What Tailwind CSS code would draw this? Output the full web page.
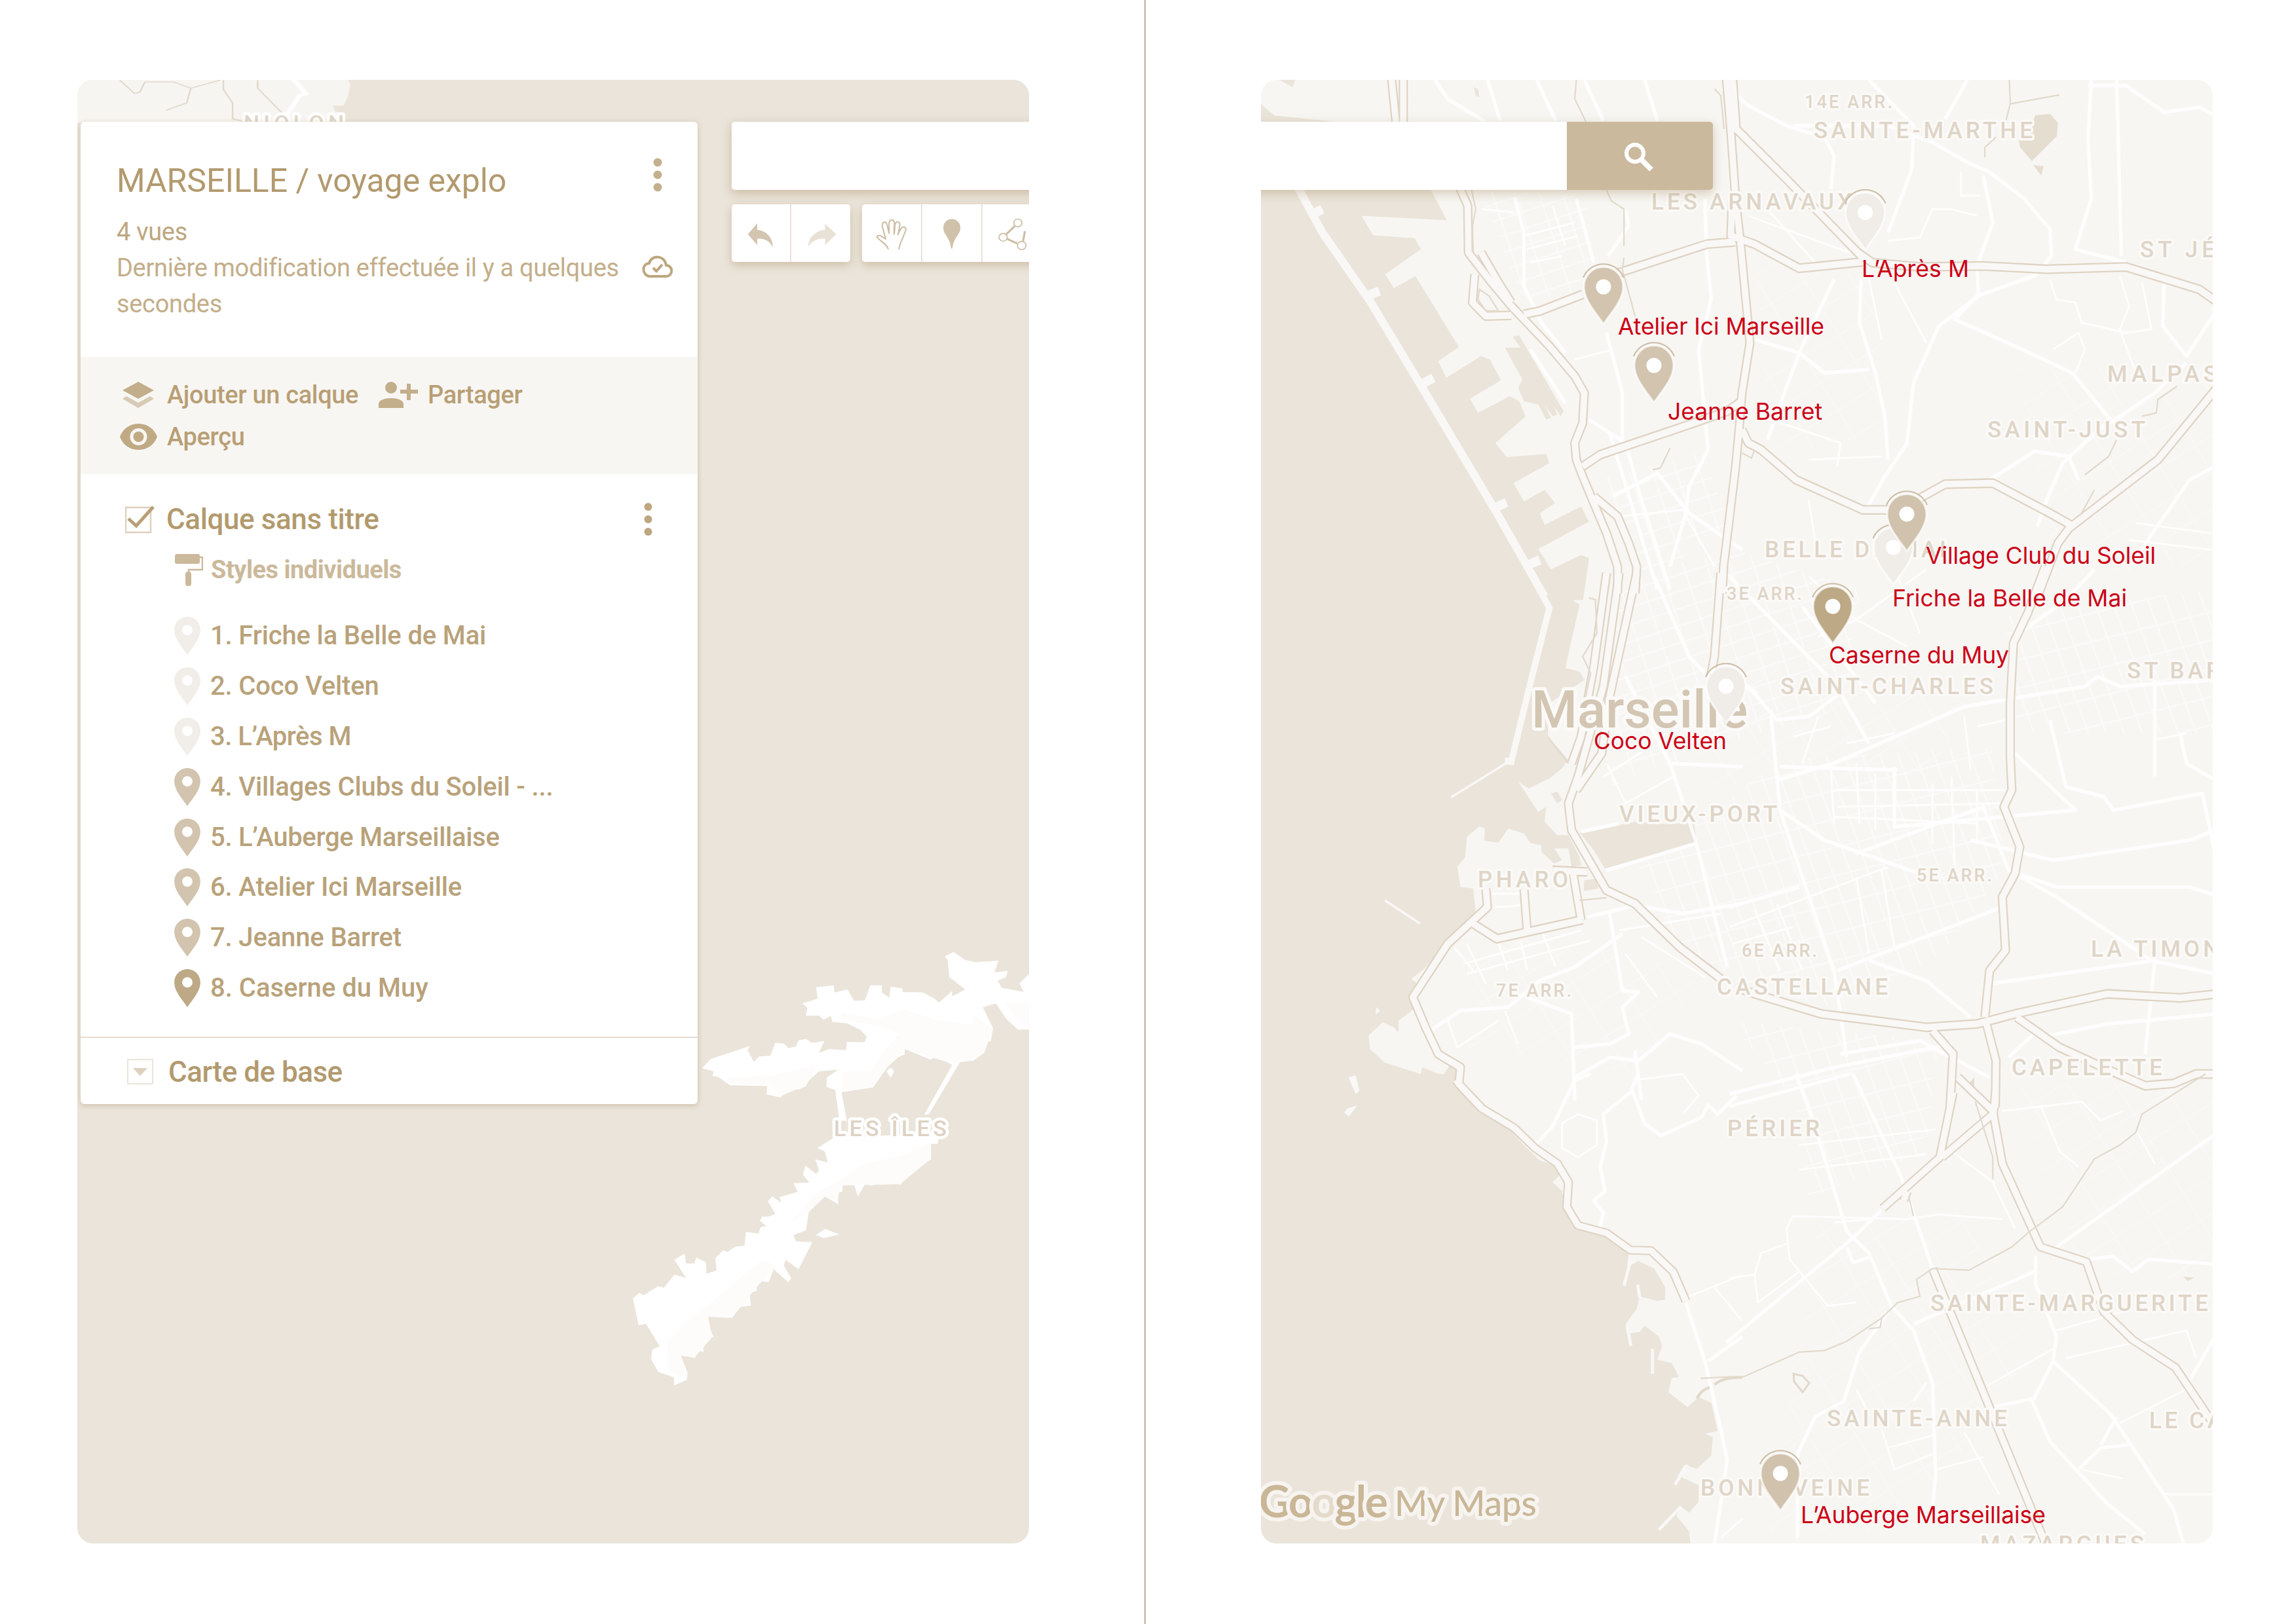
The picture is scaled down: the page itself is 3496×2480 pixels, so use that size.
<!DOCTYPE html>
<html lang="fr">
<head>
<meta charset="utf-8">
<title>MARSEILLE / voyage explo</title>
<script src="https://cdn.jsdelivr.net/npm/@tailwindcss/browser@4"></script>
</head>
<body class="bg-white">
<svg class="hidden">
  <defs>
    <path id="pin" fill-rule="evenodd" d="M0-30.500C-17-30.500-30-17-30 0C-30 20-13 38 0 57C13 38 30 20 30 0C30-17 17-30.500 0-30.500Z"/>
    <g id="mark">
      <path d="M-31-14A33.500 33.500 0 0 1 31-14" fill="none" stroke="#cdbda5" stroke-width="2"/>
      <use href="#pin" stroke="#fff" stroke-opacity=".7" stroke-width="3"/>
      <circle r="11.500" fill="#fff"/>
    </g>
  </defs>
</svg>
<main class="flex h-[2480px] w-[3496px] font-['Roboto',sans-serif]">
  <!-- Left page -->
  <section class="h-full w-[1749px] border-r-2 border-[#c0ae95] pt-[122px] pl-[118px]">
    <div class="relative h-[2235px] w-[1453px] overflow-hidden rounded-[24px] bg-[#eae4da]">
      <svg class="absolute inset-0 size-full" viewBox="118 122 1453 2235">
        <g transform="translate(100,100) scale(.6378,.4082)" fill="none" stroke-width="4">
          <path fill="#f7f5f2" d="M20 50H675L682 75L675 120L665 150L640 150L645 170L668 185V215H20Z"/>
          <g stroke="#e2d9cc"><path d="M130 55L165 105L178 100L190 62L260 62L300 85L370 55M300 85L290 140L240 168M378 55L378 90L400 140V200L430 210M460 55V85L520 180"/></g>
          <path stroke="#fff" stroke-width="12" d="M545 50L575 105L560 112L530 185"/>
        </g>
        <g transform="translate(900,1400) scale(.4464,.4719)" fill="#fff">
          <path d="M385 490L415 460L550 418L540 430L562 470L580 452L618 450L635 408L665 410L680 425L705 420L715 400L740 395L760 408L803 402L785 440L820 428L877 432L880 405L940 406L948 388L925 365L880 345L830 340L825 320L800 333L785 320L740 320L745 295L728 280L780 265L775 228L835 222L838 245L882 235L905 272L942 270L960 222L1000 222L1000 245L1025 262L1030 226L1070 232L1070 243L1140 245L1180 265L1195 278L1240 240L1240 258L1285 235L1230 195L1225 140L1215 128L1245 114L1285 140L1320 147L1398 142L1385 180L1430 175L1425 195L1395 207L1410 230L1485 243L1470 215L1515 175V365L1465 365L1425 330L1390 280L1345 293L1380 360L1372 403L1350 405L1350 440L1310 467L1275 460L1258 485L1160 640H1145L1240 480L1205 460L1180 455L1165 462L1078 428V445L1055 455L1020 485L970 552L862 568L880 660H855L840 560L810 550L812 520L850 495L785 500L750 530L740 548L712 560L705 540L665 560L655 585L605 575L608 548L480 545L440 518L420 515L425 500Z"/>
          <path d="M1015 500L1030 488L1042 500L1030 520Z"/>
          <path d="M835 715L1200 700L1190 735H1168V785L1120 808L1062 868L1015 843L965 870L945 860L918 905L905 868L865 870V890L850 892V930L805 905L750 955L740 1015L698 1030L705 1050L762 1053L715 1140L670 1110L665 1130L690 1170L680 1183L630 1140L612 1183L570 1175L572 1210L547 1218L552 1258L493 1265L490 1298L405 1295V1320L425 1360L390 1370V1408L362 1402V1428L312 1420L335 1475L333 1498L290 1517L288 1490L235 1473L210 1430L215 1400L240 1390L193 1317L168 1322L148 1235L170 1217L185 1225L235 1195L255 1200L290 1158L330 1168L290 1110L325 1090L330 1122H358L365 1103L398 1118L400 1155L435 1145L430 1105L458 1078L470 1085L500 1067L530 1065L535 1020L578 1025L585 1005L605 1000L583 985L590 970H612L635 962L610 920L625 905L655 925L650 907L712 890L697 862L752 860L730 835L738 805L775 833L785 820L772 785L815 795L805 760L780 748Z"/>
          <path d="M775 1030L805 1010L855 1028L800 1040Z"/>
          <g fill="#fdfcfb"><path d="M860 310L980 330L1080 300L1190 335L1300 350L1320 320L1378 365L1350 440L1310 465L1240 475L1078 428L1015 485L970 550L865 565V500L960 500L1010 430L1060 380L980 350L860 335Z"/><path d="M1420 275L1512 280V360L1470 340Z"/><path d="M480 540L470 520L620 515L780 480L740 545L655 580L610 545Z"/><path d="M770 900L940 800L1080 770L1165 730V785L1062 865L965 868L860 868L845 925L805 905L680 1000Z"/><path d="M400 1260L590 1110L640 1130L570 1200L490 1295L405 1295L420 1360L360 1425L310 1418L333 1495L270 1470L265 1380L330 1310Z"/></g>
        </g>
        <g fill="#ddd2c3" stroke="#fff" stroke-width="9" stroke-linejoin="round" class="[paint-order:stroke] font-medium text-[34px]">
          <text x="1273" y="1735" textLength="172">LES ÎLES</text>
          <text x="372" y="200" textLength="153" fill="#e0d7ca">NIOLON</text>
        </g>
      </svg>

      <!-- Layers card -->
      <div class="absolute top-[64px] left-[5px] flex h-[1500px] w-[942px] flex-col rounded-[6px] bg-white text-[#b29a6e] shadow-[0_2px_8px_rgba(165,135,90,0.4)]">
        <header class="flex h-[359px] justify-between pt-[60px] pl-[55px]">
          <div>
            <h1 class="text-[50px] leading-[60px] font-normal tracking-[-0.05px] whitespace-nowrap">MARSEILLE / voyage explo</h1>
            <p class="mt-[21px] text-[38px] leading-[55px] tracking-[-0.32px] text-[#bda680]">4 vues<br><span class="whitespace-nowrap text-[#c3ae8a]">Dernière modification effectuée il y a quelques</span><br><span class="text-[#c3ae8a]">secondes</span></p>
          </div>
          <div class="mr-[4px] flex w-[114px] flex-col items-center">
            <svg class="h-[52px] w-[14px] -mt-[5px]" viewBox="0 0 14 52" fill="#c3b08d"><circle cx="7" cy="7" r="6.500"/><circle cx="7" cy="26" r="6.500"/><circle cx="7" cy="45" r="6.500"/></svg>
            <svg class="mt-[97px] h-[36px] w-[48px]" viewBox="0 0 48 36" fill="none" stroke="#bda67f" stroke-width="4"><path d="M12 32H37C48 31 48 16 37 15C35-1 14-1 11 12C-1 13 0 31 12 32Z"/><path d="M17 19L22 24L31 14"/></svg>
          </div>
        </header>
        <div class="h-[179px] bg-[#f8f6f3] pt-[26px] pl-[64px] text-[38px] font-medium tracking-[-0.35px] text-[#b89f75]">
          <div class="flex h-[64px] items-center">
            <svg class="h-[40px] w-[48px]" viewBox="0 0 48 40" fill="#c3ae8b"><path d="M24 0L48 13L24 26L0 13Z"/><path fill="#d8cbb5" d="M0 26L6 22L24 32L42 22L48 26L24 40Z"/></svg>
            <span class="ml-[20px] w-[290px] whitespace-nowrap">Ajouter un calque</span>
            <svg class="ml-[33px] h-[40px] w-[60px]" viewBox="0 0 60 40" fill="#c3ae8b"><circle cx="19" cy="9" r="9"/><path d="M0 40V34C0 22 38 22 38 34V40ZM43 3H49V12H60V18H49V28H43V18H33V12H43Z"/></svg>
            <span class="ml-[15px]">Partager</span>
          </div>
          <div class="flex h-[64px] items-center">
            <svg class="-ml-[4px] h-[40px] w-[57px]" viewBox="0 0 57 40" fill="#c0aa84"><path fill-rule="evenodd" d="M28.500 0C14 0 4 9 0 20C4 31 14 40 28.500 40S53 31 57 20C53 9 43 0 28.500 0ZM28.500 7A13 13 0 1 1 28.500 33A13 13 0 1 1 28.500 7Z"/><circle cx="28.500" cy="20" r="8"/></svg>
            <span class="ml-[15px]">Aperçu</span>
          </div>
        </div>
        <div class="flex-1 border-b-2 border-[#e6ddd0] pt-[39px]">
          <div class="flex h-[60px] items-center pr-[69px] pl-[68px]">
            <svg class="h-[44px] w-[46px]" viewBox="0 0 46 44" fill="none"><rect x="1" y="4" width="38" height="38" stroke="#ddd0bd" stroke-width="2.500"/><path d="M5 21L17 32L43 3" stroke="#b89f75" stroke-width="5"/></svg>
            <h2 class="ml-[17px] flex-1 text-[44px] font-medium tracking-[-0.4px]">Calque sans titre</h2>
            <svg class="h-[50px] w-[13px]" viewBox="0 0 13 50" fill="#bda680"><circle cx="6.500" cy="6" r="6"/><circle cx="6.500" cy="25" r="6"/><circle cx="6.500" cy="44" r="6"/></svg>
          </div>
          <div class="mt-[22px] flex h-[50px] items-center pl-[144px] text-[38px] font-bold tracking-[-0.5px] text-[#cbb99b]">
            <svg class="h-[49px] w-[43px]" viewBox="0 0 43 49" fill="#cbb99b"><rect width="38" height="15" rx="3"/><path d="M38 5H42V24H21V28" fill="none" stroke="#cbb99b" stroke-width="2.500"/><rect x="16" y="27" width="9" height="22" rx="4"/></svg>
            <span class="ml-[12px]">Styles individuels</span>
          </div>
          <ul class="mt-[38px] text-[40px] font-medium tracking-[-0.15px] text-[#b9a27a] [&>li]:flex [&>li]:h-[76.8px] [&>li]:items-center [&>li]:gap-[15px] [&>li]:pl-[143px] [&_svg]:h-[58px] [&_svg]:w-[40px]">
            <li><svg viewBox="-30 -30.500 60 87.500" fill="#f1ede8"><use href="#pin"/><circle r="12" fill="#fff"/></svg>1. Friche la Belle de Mai</li>
            <li><svg viewBox="-30 -30.500 60 87.500" fill="#f1ede8"><use href="#pin"/><circle r="12" fill="#fff"/></svg>2. Coco Velten</li>
            <li class="tracking-[-0.5px]"><svg viewBox="-30 -30.500 60 87.500" fill="#f1ede8"><use href="#pin"/><circle r="12" fill="#fff"/></svg>3. L’Après M</li>
            <li><svg viewBox="-30 -30.500 60 87.500" fill="#d2c4ae"><use href="#pin"/><circle r="12" fill="#fff"/></svg>4. Villages Clubs du Soleil - ...</li>
            <li class="tracking-[-0.3px]"><svg viewBox="-30 -30.500 60 87.500" fill="#d2c4ae"><use href="#pin"/><circle r="12" fill="#fff"/></svg>5. L’Auberge Marseillaise</li>
            <li><svg viewBox="-30 -30.500 60 87.500" fill="#d2c4ae"><use href="#pin"/><circle r="12" fill="#fff"/></svg>6. Atelier Ici Marseille</li>
            <li><svg viewBox="-30 -30.500 60 87.500" fill="#d2c4ae"><use href="#pin"/><circle r="12" fill="#fff"/></svg>7. Jeanne Barret</li>
            <li class="tracking-normal"><svg viewBox="-30 -30.500 60 87.500" fill="#bda986"><use href="#pin"/><circle r="12" fill="#fff"/></svg>8. Caserne du Muy</li>
          </ul>
        </div>
        <div class="flex h-[101px] items-center gap-[23px] pt-[2px] pl-[71px] text-[44px] font-medium tracking-[-0.5px]">
          <svg class="h-[39px] w-[40px]" viewBox="0 0 40 39"><rect x="1" y="1" width="38" height="37" fill="#fff" stroke="#ebe4da" stroke-width="2"/><path fill="#ddd0bd" d="M9 14H31L20 26Z"/></svg>
          Carte de base
        </div>
      </div>

      <!-- Search field and drawing tools -->
      <div class="absolute top-[64px] left-[999px] h-[104px] w-[500px] rounded-[5px] bg-white shadow-[0_5px_16px_rgba(165,135,90,0.45)]"></div>
      <div class="absolute top-[190px] left-[999px] flex h-[88px] gap-[18px] [&>div]:flex [&>div]:overflow-hidden [&>div]:rounded-[5px] [&>div]:bg-white [&>div]:shadow-[0_5px_14px_rgba(165,135,90,0.4)]">
        <div>
          <svg class="h-[88px] w-[91px] border-r-2 border-[#eae2d7]" viewBox="165 634 262 266" preserveAspectRatio="none"><path fill="#d3c5b0" d="M238 772L280 722V752C325 757 350 790 350 832C335 803 315 792 280 792V822Z"/></svg>
          <svg class="h-[88px] w-[90px]" viewBox="428 634 262 266" preserveAspectRatio="none"><path fill="#e9e1d5" d="M628 772L578 724V752C530 757 505 790 503 830C520 803 540 792 578 792V822Z"/></svg>
        </div>
        <div>
          <svg class="h-[88px] w-[92px] border-r-2 border-[#eae2d7]" viewBox="743 634 264 266" preserveAspectRatio="none" fill="none" stroke="#cdbda5" stroke-width="6" stroke-linecap="round" stroke-linejoin="round"><path d="M860 840C855 820 840 815 815 792C802 778 820 775 832 782L849 795L834 735C832 712 851 710 855 728L864 768M864 768L864 722C866 700 886 700 888 722L886 772M888 765L891 725C898 708 914 715 912 732L904 774M906 768L918 745C930 732 944 742 938 756L922 798C912 815 913 825 908 840"/></svg>
          <svg class="h-[88px] w-[92px] border-r-2 border-[#eae2d7]" viewBox="1007 634 266 266" preserveAspectRatio="none" fill="#d0c1aa"><path d="M1140 702C1118 702 1102 720 1102 742C1102 775 1132 785 1137 838H1143C1148 785 1179 775 1179 742C1179 720 1162 702 1140 702Z"/></svg>
          <svg class="h-[88px] w-[92px]" viewBox="1275 634 266 266" preserveAspectRatio="none" fill="none" stroke="#cdbda5"><g stroke-width="5"><circle cx="1431" cy="720" r="18"/><circle cx="1366" cy="786" r="18"/><circle cx="1448" cy="824" r="19"/></g><path stroke-width="9" d="M1417 735L1380 772M1384 794L1428 815M1454 803L1462 758"/></svg>
        </div>
      </div>
    </div>
  </section>

  <!-- Right page -->
  <section class="h-full w-[1747px] pt-[122px] pl-[176px]">
    <div class="relative h-[2235px] w-[1453px] overflow-hidden rounded-[24px] bg-[#f7f6f3]">
      <svg class="absolute inset-0 size-full" viewBox="1925 122 1453 2235">
        <defs>
          <pattern id="gridA" width="34" height="25" patternUnits="userSpaceOnUse" patternTransform="rotate(-18)"><path d="M0 0H34M0 0V25" stroke="#fff" stroke-width="5" fill="none"/></pattern>
          <pattern id="gridB" width="26" height="42" patternUnits="userSpaceOnUse" patternTransform="rotate(-14) skewX(6)"><path d="M0 0H26M0 0V42" stroke="#fff" stroke-width="5" fill="none"/></pattern>
          <pattern id="gridC" width="62" height="48" patternUnits="userSpaceOnUse" patternTransform="rotate(-32)"><path d="M0 0H62M0 0V48" stroke="#fdfdfc" stroke-width="5" fill="none"/></pattern>
          <!-- Expressways, drawn twice: outline, then roadway -->
          <g id="ways" fill="none" stroke-linejoin="round">
            <g transform="translate(1900,100) scale(.4847,.5102)">
              <path d="M462 30L478 180M500 30L500 180"/>
              <path d="M675 360L703 420L705 560L770 640L840 720L960 840L1040 930L1070 980L1065 1070L1040 1130L1045 1180L1065 1230L1100 1310L1140 1400L1175 1500L1175 1580"/>
              <path d="M1100 1290L1175 1350L1210 1430L1235 1500L1230 1580"/>
              <path d="M880 745L930 735L1065 685M1180 620L1455 535L1545 528"/>
              <path d="M1065 1200L1120 1165L1400 1075L1520 1035L1565 1005"/>
              <path d="M725 625L718 710L760 750L840 748M745 560L800 650L840 710"/>
            </g>
            <g transform="translate(2640,100) scale(.4847,.5102)">
              <path d="M-10 30L5 200L20 400L35 530L65 830L40 980L30 1100L20 1200L-18 1500L-22 1580"/>
              <path d="M10 30L22 190L180 340L420 575"/>
              <path d="M10 380L5 510L80 535L220 607L420 588M405 560L450 590L600 603L800 600L1000 610L1250 603L1480 670L1540 710"/>
              <path d="M40 1090L60 1130L100 1150L210 1240L420 1330L520 1330M600 1295L680 1253L830 1250L1000 1335L1075 1375"/>
              <path d="M1540 960L1350 1180L1070 1385L1035 1430L975 1580"/>
            </g>
            <g transform="translate(1900,880) scale(.4847,.5102)">
              <path d="M1180 -10L1130 330L1050 600L1020 680L1030 760L1140 940L1230 980L1370 1110L1500 1205"/>
              <path d="M1235 -10L1150 360L1125 530L1045 640"/>
              <path d="M1140 -10L1100 270L1060 480L1030 560"/>
              <path d="M1500 -10L1480 240L1468 300"/>
              <path d="M760 935L765 990L640 1100L530 1260L570 1350L610 1430L680 1470L675 1520L745 1590"/>
              <path d="M720 1040L795 1085L1065 1028M880 935L890 1060M1035 890L1060 1030M970 880L1080 885"/>
            </g>
            <g transform="translate(2640,880) scale(.4847,.5102)">
              <path d="M995 -30L940 110L895 200L885 380L885 540L890 640L865 690L915 810L900 890L860 960L870 1120L820 1180L805 1320"/>
              <path d="M20 1230L80 1250L290 1310L620 1350L780 1340L900 1310L1190 1250L1420 1262L1540 1250"/>
              <path d="M640 1360L705 1430L695 1590M810 1340L840 1450L838 1590"/>
              <path d="M905 1320L1040 1410L1200 1480L1310 1525L1400 1518L1470 1490L1540 1490"/>
              <path d="M720 1500L830 1600"/>
            </g>
            <g transform="translate(2640,1640) scale(.4847,.4719)">
              <path d="M705 60L663 270L483 435M830 130L670 270M838 60L832 130L860 290L980 560L1125 608L1180 770L1270 860L1405 950L1520 1125"/>
              <path d="M560 380L550 410M640 630L820 1080L1000 1530"/>
            </g>
            <g transform="translate(1900,1640) scale(.4847,.4719)">
              <path d="M665 20L690 50L745 110L850 175L915 240L985 290L1020 350L1015 430L1050 490L1140 515L1215 570L1280 572L1350 640L1390 735"/>
            </g>
          </g>
        </defs>

        <!-- Dense street blocks -->
        <g opacity=".55">
          <path fill="url(#gridA)" d="M2470 880L2650 840L2840 900L2820 1080L2620 1140L2460 1200Z M2260 290L2420 300L2440 460L2320 450Z M2450 730L2600 690L2640 800L2500 900Z"/>
          <path fill="url(#gridB)" d="M2500 1320L2720 1160L3040 1140L3060 1330L2960 1460L2800 1540L2660 1500L2560 1440Z M2640 1560L2960 1590L2940 1760L2760 1830L2740 1680Z M3060 940L3378 900V1120L3080 1120Z"/>
          <path fill="url(#gridC)" opacity=".7" d="M2240 1420L2600 1480L2500 1640L2240 1600Z M2680 400L2860 420L2880 660L2700 700Z M3080 560L3378 560V860L3140 880Z M3060 1660L3378 1640V1960L3180 1940Z M2780 1860L3000 1850L3100 2080L2900 2340L2700 2340Z M2560 1000L3000 1060L2960 1180L2600 1200Z"/>
        </g>

        <!-- Sea and basins -->
        <g fill="#eae4da">
          <path transform="translate(1900,100) scale(.4847,.5102)" d="M40 360H580L637 463L368 450L405 508L535 517L556 550L443 625L470 667L538 630L675 843L610 885L635 935L745 870L772 880L808 942L710 997L735 1040L835 990L865 1005L885 1050L790 1130L825 1172L950 1163L960 1190L847 1250L880 1305L945 1270L978 1310L930 1340L945 1375L1060 1320L1085 1365L925 1447L965 1508L1060 1465L1085 1475L1066 1600H40ZM820 845H870L845 812L865 808L1005 1035L995 1050L975 1020L985 1045L970 1050L945 1015L965 1055L950 1060L925 1015L880 1005L862 965L875 940ZM50 115L95 150L280 168H50ZM110 43H160L150 65ZM722 65L735 70L740 95L728 90Z"/>
          <path transform="translate(1900,880) scale(.4847,.5102)" d="M40 0H1068L1035 75L1055 85L1010 275L1055 285L1070 310L1040 330L960 380L955 480L1020 550L1000 575L960 605L895 635L862 615L925 705L950 690L945 735L985 775L1020 775L1055 840L1060 865L1030 870L1020 815L975 815L1000 850L975 860L935 825L935 805L900 798L880 770L830 755L800 797L755 792L757 755L740 748L700 780L695 840L670 870L680 930L720 935L728 1005L640 1100L560 1180L525 1205L545 1220L520 1250L540 1290L485 1330V1365L470 1350L435 1335L390 1375L395 1415L440 1455L555 1490L560 1470L625 1495L645 1465L690 1480L665 1525L735 1580H40ZM1055 768L1230 735L1330 742L1415 738L1425 797L1330 825L1135 875L1100 820ZM1070 910L1105 905L1115 935L1068 942ZM965 650L985 645L1000 670L985 680Z"/>
          <path transform="translate(1900,1640) scale(.4847,.4719)" d="M40 0H640L665 45L690 70L760 130L830 175L880 230L930 280L975 295L1000 320L970 350L1000 378L1010 440L1045 500L1130 520L1180 555L1210 580L1205 620L1225 615L1240 605L1290 630L1325 690V730L1300 735L1245 720L1235 760L1200 810L1210 840L1245 835L1260 815L1305 850L1315 880L1300 925L1345 935L1368 980L1345 985L1335 1030L1395 1078L1430 1045L1470 1065L1490 1155L1450 1165L1475 1175L1470 1235L1425 1278L1385 1265L1365 1300L1430 1330V1385L1400 1420L1375 1400L1360 1430L1400 1480L1405 1530H40Z"/>
          <path fill="#e6ddd1" d="M3107 176L3130 174L3142 188L3140 208L3102 246L3084 225L3082 215L3100 200ZM3104 252L3120 254L3116 268ZM3003 1658L3014 1645L3014 1662ZM3333 1950L3350 1951L3340 1956Z"/>
          <path fill="#f7f6f3" stroke="#e2d9cb" stroke-width="3" d="M2738 2098L2752 2101L2762 2112L2752 2126L2739 2110Z"/>
        </g>

        <!-- Breakwaters, piers and islets -->
        <g fill="none" stroke="#f9f8f6">
          <g transform="translate(1900,100) scale(.4847,.5102)" stroke-width="25">
            <path d="M165 360L245 500L395 705L560 965L795 1340L945 1590"/>
            <path stroke-width="28" d="M205 450L245 430M385 690L425 675M555 955L595 935M785 1325L825 1308M880 1500L930 1480"/>
          </g>
          <g transform="translate(1900,880) scale(.4847,.5102)"><path stroke-width="20" d="M895 -20L960 95L900 320L840 555L820 552"/><path stroke-width="7" d="M840 550L650 662M442 970L553 1040"/></g>
          <g transform="translate(1900,1640) scale(.4847,.4719)" stroke-width="10">
            <path d="M1217 600L1195 685M1238 682L1245 725M1205 815L1217 880M1285 890V970M1395 1265L1355 1330M1375 1400L1305 1475"/>
            <path stroke="none" fill="#f9f8f6" d="M327 10L350 5L362 55L350 65ZM313 125L325 110L355 103L328 138Z"/>
          </g>
          <path stroke="none" fill="#f9f8f6" d="M2101 1538L2107 1544L2100 1549Z"/>
        </g>

        <!-- Main streets -->
        <g fill="none" stroke="#fff" stroke-linejoin="round" stroke-width="11" stroke-opacity=".85">
          <g transform="translate(1900,100) scale(.4847,.5102)">
            <path d="M600 43L640 100L760 170M765 43L805 165M920 43L980 165M1070 43L1130 165M1260 43L1300 165M850 395L880 500L880 660L935 770L1010 860M1045 400L1100 590M1200 430L1210 480L1145 570M1140 800L1190 980L1190 1120M1085 1060L1200 1130L1250 1300L1340 1568M900 850L1010 1010M1450 400L1455 560L1470 700L1430 850L1460 1150L1400 1260L1390 1340L1340 1500M1160 1290L1300 1220L1400 1340L1568 1450M1150 1100L1300 1568"/>
            <path stroke-width="6" d="M750 430L850 440M880 510L1040 470M890 550L1050 510M900 590L1000 570M970 420L1010 540M1040 880L1160 850M1180 1350L1380 1330L1480 1500"/>
          </g>
          <g transform="translate(2640,100) scale(.4847,.5102)">
            <path d="M0 70L60 120L180 180L300 215L330 270L320 370M440 43L580 180L575 310L500 500M200 180L500 180L640 230L750 290L820 320L930 400L1010 490L1015 570L960 630L780 690L710 760L900 840L1080 920L1200 1060L1050 1190L1000 1300L970 1380M750 43L680 160M1140 43L1130 220L1140 400L1090 550L1250 590M1220 43L1235 570M1130 60L1250 60L1370 140L1480 125L1530 150M800 330L830 470L780 600L785 690L660 780L580 950L560 1130L490 1230L430 1330M415 640L410 770L460 920L490 1050L500 1180M80 820L220 860L300 920L440 910M330 640L220 860L120 1120M1370 650L1365 780L1440 870L1530 740M820 1240L960 1155L1070 1170L1100 1240M1440 890L1340 980L1200 1070M1530 1200L1450 1240L1340 1390L1270 1490"/>
            <path stroke-width="6" d="M60 450L380 560M120 430L280 600M500 525L600 515L640 430L700 430L780 450M730 320V390H790M1010 640L1030 700L1090 710L1110 770L1250 800L1330 790L1300 650M1230 630L1260 720L1230 790L1280 920M1020 850L1100 800L1120 850L1090 920M520 650L620 830M480 820L440 640M100 1050L350 1130L340 1200M250 1180L480 1170M250 1300L270 1420M1280 1370L1520 1400M1260 1420L1520 1450"/>
          </g>
          <g transform="translate(1900,880) scale(.4847,.5102)">
            <path d="M1290 0L1400 240L1450 290M1200 300L1340 560L1420 790L1520 1170M1330 560L1568 570M1060 765L1180 740M1140 880L1420 800M1080 1020L1230 985L1380 1010L1568 980M1150 1010L1190 1240L1240 1245L1190 1290L1210 1370L1150 1400L1040 1410M585 1360L680 1300L830 1290L930 1210L1040 1170L1190 1070M890 1260L1030 1310L1040 1568M1230 1420L1250 1568M1040 1500L1150 1440L1240 1450L1340 1370L1440 1400L1568 1480"/>
            <path stroke-width="6" d="M660 1110L720 1180M700 1100L760 1220M800 1100L830 1180M870 1090L890 1180M940 1070L980 1170M690 1160L1060 1060M700 1190L1090 1090M780 950L870 950M790 990L880 985M640 1330L670 1410L800 1330M820 1300L860 1400M1130 600L1260 520M1140 560L1200 680L1350 600M1200 1130L1300 1260M1250 1080L1450 1200M1180 1060L1500 1010"/>
          </g>
          <g transform="translate(2640,880) scale(.4847,.5102)">
            <path d="M230 90L460 380M0 0L310 300M-60 290L60 330L150 430L250 420L350 350L440 500M130 400L160 700L230 900L330 1180L370 1440M150 610L330 560L740 390L1120 330L1160 300L1230 330L1530 310M160 570L530 580M520 570L520 750L1090 700L900 530M160 700L300 790L600 890M0 990L220 930M400 830L800 690L880 880L1030 960L1220 1080L1330 1150L1530 1190M760 790L1020 850L1450 790L1530 760M910 890L1030 930L1450 930L1530 955M1010 430L1060 630L1180 660L1210 700L1490 650L1530 830M340 1180L560 1100L860 990M440 1150L620 1210L760 1320M820 1220L1340 1150L1310 1430M350 1430L600 1390L820 1500M0 1550L330 1470L700 1400M980 1380L1190 1340L1530 1310M880 1440L960 1370M930 160L1060 70L1150 -20M1340 310L1340 600M1420 470L1440 560L1530 610M0 310L90 350"/>
            <path stroke-width="6" d="M250 0L400 130L620 -20M530 0L600 170M280 180L400 130L560 210M370 500L520 470M740 420L760 580M780 450L870 430M1340 490L1440 470M200 480L320 450M230 560L280 420M320 580L330 740M400 560L410 740M460 590V760M330 640H870M340 690L860 680M330 720L780 740M640 620V800M700 600L710 880M780 640V800M0 1050L500 870M10 1100L200 1050M80 1000L160 1180M150 980L230 1180M400 900L440 1130M480 880L520 1110"/>
          </g>
          <g transform="translate(1900,1640) scale(.4847,.4719)">
            <path d="M1090 0L1040 20L970 170L915 230M1240 0L1215 60L1130 130L1140 220L1120 300L1135 380L1100 410L1130 450L1120 495M1220 50L1260 160L1310 200L1440 140L1460 100L1490 130L1550 70M1390 740L1450 930L1500 1150L1520 1250L1480 1521M1460 930L1568 850"/>
            <path stroke-width="6" d="M1050 130L1110 150V230L1050 270L1000 240L1000 160ZM1400 720L1568 650M1480 690L1568 800M1230 20L1380 0L1430 70L1380 130M1500 1500L1568 1440"/>
          </g>
          <g transform="translate(2640,1640) scale(.4847,.4719)">
            <path d="M-10 870L390 530L480 440M0 105L380 0M210 0L270 170L370 510L440 580L510 750L580 830L640 1000L650 1300L640 1400M390 0L540 330L640 630M370 560L390 610L450 590M1010 575L1523 200M500 770L410 900L360 1060L270 1110L215 1230V1500M580 810L960 640M965 590V680L1030 850L1020 930L960 1050L820 1080M950 1050L1010 1190L1190 1390L1310 1490M1020 930L1200 1100L1400 1410L1430 1521M1100 1280L1170 1210L1260 1200M1130 600L1210 590L1270 640L1320 600L1523 615M1440 1010L1530 850M1220 1110L1170 1200"/>
            <path stroke-width="6" d="M220 230L650 180M220 310L620 260M180 500L200 460L560 470L660 455L860 470M330 480L450 470M80 650L100 580L180 550M80 650L90 740L220 640M180 500L190 600L310 750L400 740M0 660L80 650M700 250L830 350L900 500M1030 830L1240 770M1060 920L1230 880L1440 830L1470 920M810 1010L1020 890M480 1150L520 1280L640 1230M500 1210L640 1170M740 1160L850 1360M650 1280L800 1240M1110 1280L1240 1310M1370 1360L1523 1360M1230 1130L1440 1020M860 120L1110 90L1170 150L1240 120M980 100L1040 250L1100 300M1280 180L1340 290M400 1020L440 1100M580 1060L620 1000"/>
          </g>
        </g>

        <use href="#ways" stroke="#dfd3c3" stroke-width="29"/>
        <use href="#ways" stroke="#f9f8f6" stroke-width="20"/>
        <g fill="none" stroke="#e2d9cb" stroke-width="4.500">
          <path transform="translate(1900,100) scale(.4847,.5102)" d="M715 373L728 430L718 480L720 560M1045 43L1040 100L1075 168M1140 373L1155 405L1195 430V540M1195 575L1190 610L1230 750M740 670L770 690L800 735H760L735 700ZM1285 1210L1310 1205L1340 1145M1480 70L1500 90L1510 190"/>
          <path transform="translate(2640,100) scale(.4847,.5102)" d="M882 43L885 115L870 170M885 115L1040 88M840 215L805 245V275M1410 960L1350 1000L1345 1040L1300 1050M1220 1120L1195 1170L1120 1225M40 1160L70 1175L80 1150M1110 1340L1150 1270"/>
          <path transform="translate(1900,880) scale(.4847,.5102)" d="M1085 65L1105 70L1110 170L1065 240L1090 290L1070 380M955 480L1020 560M1055 970L1140 962"/>
          <path transform="translate(2640,1640) scale(.4847,.4719)" d="M-90 985L0 980L45 980L220 900L300 895L370 865L480 790L475 820L440 825M480 790L530 740L600 720L590 665L640 630L755 635L890 560L940 515L1050 430L1150 275L1230 230L1280 190L1300 130L1500 0M775 90L830 270V340M565 395L580 460"/>
          <path stroke-width="9" transform="translate(1900,1640) scale(.4847,.4719)" d="M1425 1050Q1440 1020 1465 1015M1480 1005Q1510 980 1568 982"/>
        </g>

        <!-- District names -->
        <g fill="#dfd5c7" stroke="#fbfaf8" stroke-width="7" stroke-linejoin="round" class="[paint-order:stroke] font-medium text-[35px]">
          <g class="text-[27px]">
            <text x="2755" y="165" textLength="134">14E ARR.</text>
            <text x="2636" y="916" textLength="115">3E ARR.</text>
            <text x="2284" y="1522" textLength="115">7E ARR.</text>
            <text x="2659" y="1461" textLength="115">6E ARR.</text>
            <text x="2926" y="1346" textLength="115">5E ARR.</text>
          </g>
          <text x="2769" y="211" textLength="334">SAINTE-MARTHE</text>
          <text x="2521" y="320" textLength="306">LES ARNAVAUX</text>
          <text x="3267" y="393" textLength="114">ST JÉ</text>
          <text x="3217" y="583" textLength="168">MALPAS</text>
          <text x="3034" y="668" textLength="241">SAINT-JUST</text>
          <text x="2694" y="851" textLength="277">BELLE DE MAI</text>
          <text x="2718" y="1060" textLength="325">SAINT-CHARLES</text>
          <text x="3247" y="1036" textLength="143">ST BAR</text>
          <text x="2472" y="1255" textLength="241">VIEUX-PORT</text>
          <text x="2256" y="1355" textLength="138">PHARO</text>
          <text x="2621" y="1519" textLength="261">CASTELLANE</text>
          <text x="3192" y="1461" textLength="196">LA TIMON</text>
          <text x="3071" y="1642" textLength="230">CAPELETTE</text>
          <text x="2637" y="1735" textLength="141">PÉRIER</text>
          <text x="2947" y="2002" textLength="424">SAINTE-MARGUERITE</text>
          <text x="2789" y="2178" textLength="275">SAINTE-ANNE</text>
          <text x="3281" y="2181" textLength="112">LE CA</text>
          <text x="2596" y="2284" textLength="258">BONNEVEINE</text>
          <text x="3023" y="2370" textLength="250">MAZARGUES</text>
          <text x="2338" y="1111" textLength="330" fill="#d3c6b3" stroke-width="10" class="text-[80px]">Marseille</text>
        </g>

        <!-- Places -->
        <g>
          <use href="#mark" x="2847.500" y="324.500" fill="#f0ece7"/>
          <use href="#mark" x="2448" y="438" fill="#d2c4ae"/>
          <use href="#mark" x="2525" y="558" fill="#d2c4ae"/>
          <use href="#mark" x="2890.500" y="836" fill="#f0ece7"/>
          <use href="#mark" x="2911" y="785" fill="#d0c2ac"/>
          <use href="#mark" x="2798" y="926" fill="#bda986"/>
          <use href="#mark" x="2635" y="1048" fill="#f0ece7"/>
          <use href="#mark" x="2718" y="2250" fill="#d0c2ac"/>
        </g>
        <g fill="#cc0016" class="font-['Inter',sans-serif] text-[35.500px]">
          <text x="2842" y="423" textLength="164">L’Après M</text>
          <text x="2470" y="510.500" textLength="315">Atelier Ici Marseille</text>
          <text x="2546" y="641" textLength="236">Jeanne Barret</text>
          <text x="2940" y="860.500" textLength="351">Village Club du Soleil</text>
          <text x="2889" y="926" textLength="358">Friche la Belle de Mai</text>
          <text x="2792" y="1013" textLength="275">Caserne du Muy</text>
          <text x="2433" y="1144" textLength="203">Coco Velten</text>
          <text x="2749" y="2326" textLength="374">L’Auberge Marseillaise</text>
        </g>
        <g fill="#c9b797" stroke="#f7f4f0" stroke-width="12" stroke-linejoin="round" class="[paint-order:stroke] font-['Lato',sans-serif]">
          <text x="1922" y="2317" textLength="197" class="text-[66px] font-bold">Go<tspan fill="#e4dacb">o</tspan>gle</text>
          <text x="2129" y="2315" textLength="217" class="text-[54px] font-medium">My Maps</text>
        </g>
      </svg>

      <!-- Search bar, right end -->
      <div class="absolute top-[64px] -left-[40px] flex h-[104px] w-[730px] overflow-hidden rounded-[5px] bg-white shadow-[0_5px_16px_rgba(165,135,90,0.4)]">
        <div class="flex-1"></div>
        <div class="flex w-[223px] items-center justify-center bg-[#cbb99e] pt-[4px] pr-[5px]">
          <svg class="h-[46px] w-[48px]" viewBox="0 0 48 46" fill="none" stroke="#fff"><circle cx="19" cy="17" r="13" stroke-width="6"/><path stroke-width="8" d="M28 26L44 42"/></svg>
        </div>
      </div>
    </div>
  </section>
</main>
</body>
</html>
